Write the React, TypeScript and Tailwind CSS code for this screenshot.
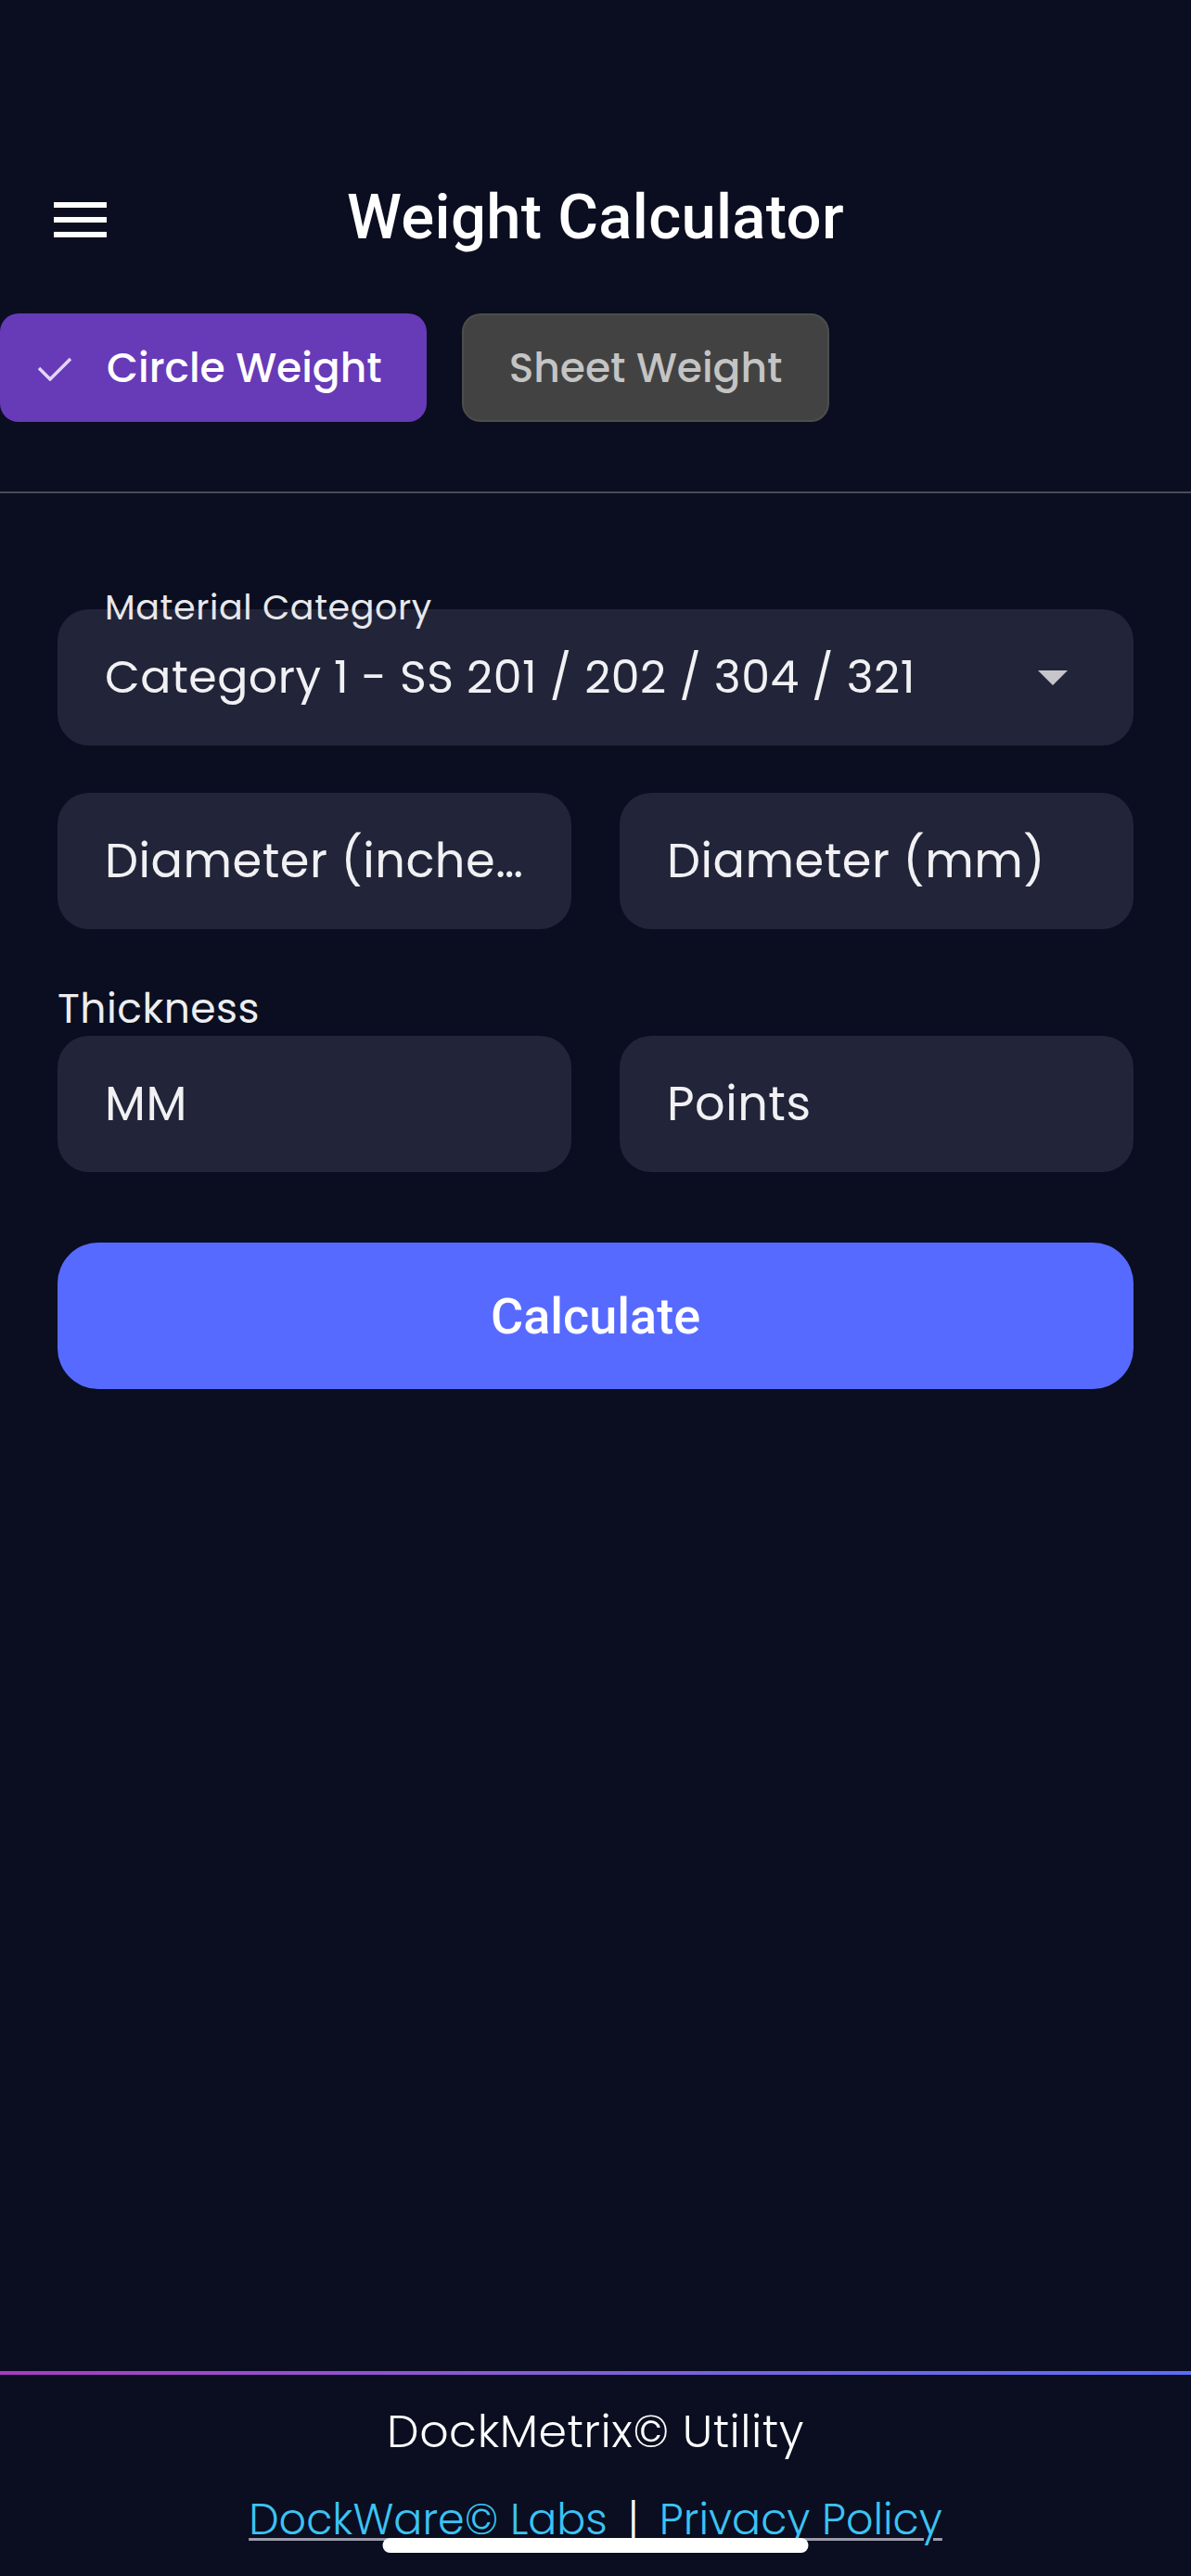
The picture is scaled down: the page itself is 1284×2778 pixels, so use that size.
import { useState } from "react";

const poppins = "font-['Poppins','Open_Sans',sans-serif]";
const sf = "font-['Roboto','Inter',sans-serif]";

const Field = ({ placeholder }: { placeholder: string }) => (
  <div className="flex h-[147px] min-w-0 flex-1 items-center rounded-[34px] bg-[#222539] px-[51px]">
    <span className={`${poppins} truncate text-[51px] tracking-[0.5px] text-[#f1f1f4]`}>{placeholder}</span>
  </div>
);

export default function App() {
  const [tab, setTab] = useState<"circle" | "sheet">("circle");

  return (
    <div className="relative flex min-h-[2778px] w-full flex-col bg-[#0a0e20] text-white">
      {/* header */}
      <div className="mt-[190px] grid h-[92px] grid-cols-[1fr_auto_1fr] items-center">
        <div className="flex flex-col gap-[10px] pl-[58px]">
          <div className="h-[6px] w-[57px] bg-white" />
          <div className="h-[6px] w-[57px] bg-white" />
          <div className="h-[6px] w-[57px] bg-white" />
        </div>
        <h1 className={`${sf} -mt-[6px] text-[67px] font-medium tracking-[0.3px] text-white`}>Weight Calculator</h1>
        <div />
      </div>

      {/* tabs */}
      <div className="mt-[56px] flex h-[117px] gap-[38px]">
        <button
          onClick={() => setTab("circle")}
          className={`flex w-[460px] items-center rounded-[20px] pl-[40px] ${
            tab === "circle" ? "bg-[#673ab7]" : "bg-[#424242]"
          }`}
        >
          <svg width="38" height="28" viewBox="0 0 38 28" className="shrink-0">
            <polyline points="2,14 14,26 36,4" fill="none" stroke="#e2d6fa" strokeWidth="3.5" />
          </svg>
          <span className={`${poppins} ml-[37px] text-[44px] font-medium text-white`}>Circle Weight</span>
        </button>
        <button
          onClick={() => setTab("sheet")}
          className="flex w-[396px] items-center justify-center rounded-[20px] border-2 border-[#4d4d4d] bg-[#424242]"
        >
          <span className={`${poppins} text-[44px] font-medium text-[#c4c4c4]`}>Sheet Weight</span>
        </button>
      </div>

      <div className="mt-[75px] h-[2px] w-full bg-[#4a4a55]" />

      {/* form */}
      <div className="flex flex-col px-[62px]">
        <div className="relative mt-[125px] flex h-[147px] items-center rounded-[34px] bg-[#222539] pl-[51px] pr-[71px]">
          <span className={`${poppins} absolute left-[51px] top-[-24px] text-[38px] leading-[44px] tracking-[0.6px] text-[#e8e8ec]`}>
            Material Category
          </span>
          <span className={`${poppins} flex-1 text-[49px] tracking-[0.5px] text-[#f1f1f4]`}>
            Category 1 - SS 201 / 202 / 304 / 321
          </span>
          <svg width="32" height="16" viewBox="0 0 32 16">
            <polygon points="0,0 32,0 16,16" fill="#c6c6ca" />
          </svg>
        </div>

        <div className="mt-[51px] flex gap-[52px]">
          <Field placeholder="Diameter (inches)" />
          <Field placeholder="Diameter (mm)" />
        </div>

        <div className={`${poppins} mt-[62px] text-[44px] leading-[48px] tracking-[0.5px] text-[#ededf0]`}>Thickness</div>

        <div className="mt-[5px] flex gap-[52px]">
          <Field placeholder="MM" />
          <Field placeholder="Points" />
        </div>

        <button className="mt-[76px] flex h-[158px] items-center justify-center rounded-[44px] bg-[#576aff]">
          <span className={`${sf} text-[54px] font-medium text-white`}>Calculate</span>
        </button>
      </div>

      {/* footer */}
      <div className="mt-auto flex flex-col items-center">
        <div className="h-[4px] w-full bg-gradient-to-r from-[#a83ac2] via-[#7f5fd8] to-[#5a6cf8]" />
        <div className={`${poppins} mt-[30px] text-[49px] font-light leading-[62px] tracking-[0.5px] text-white`}>
          DockMetrix© Utility
        </div>
        <div className={`${poppins} mb-[31px] mt-[34px] flex items-center text-[46px] font-light leading-[60px]`}>
          <a className="text-[#3cc3f3] underline decoration-[#9c9cab] decoration-[3px] underline-offset-[4px]">DockWare© Labs </a>
          <span className="mx-[22px] text-white">|</span>
          <a className="text-[#3cc3f3] underline decoration-[#9c9cab] decoration-[3px] underline-offset-[4px]">Privacy Policy</a>
        </div>
      </div>

      <div className="absolute bottom-[25px] left-1/2 h-[16px] w-[459px] -translate-x-1/2 rounded-full bg-white" />
    </div>
  );
}
